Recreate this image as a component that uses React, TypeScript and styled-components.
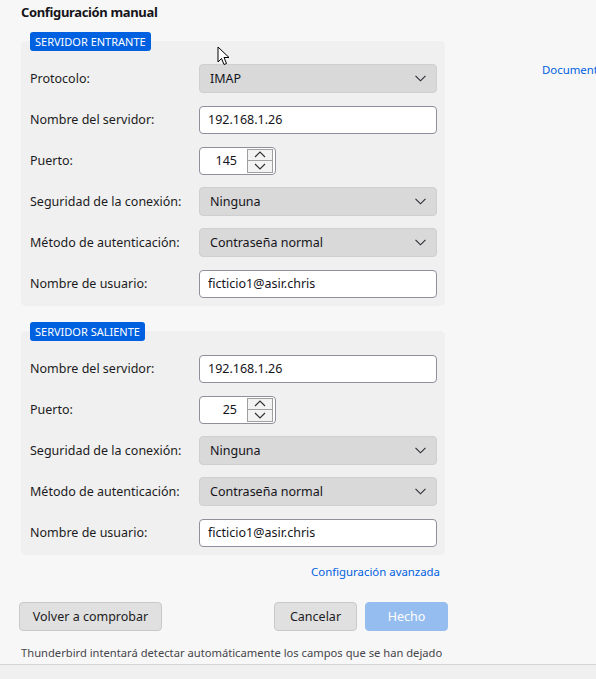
import React from "react";
import styled, { createGlobalStyle } from "styled-components";

const Global = createGlobalStyle`
  html, body { margin: 0; padding: 0; background: #f7f7f7; }
  body { font-family: "Noto Sans", "Open Sans", sans-serif; color: #15141a; }
  * { box-sizing: border-box; }
`;

const Page = styled.div`
  position: relative;
  width: 596px;
  height: 679px;
  overflow: hidden;
  background: #f7f7f7;
  display: flex;
  flex-direction: column;
`;

const Body = styled.div`
  flex: 1;
  display: flex;
  gap: 94px;
  min-width: 0;
`;

const Main = styled.div`
  width: 448px;
  flex-shrink: 0;
  display: flex;
  flex-direction: column;
  padding-left: 19px;
`;

const Side = styled.div`
  padding-top: 57px;
  white-space: nowrap;
  min-width: 0;
`;

const Title = styled.h2`
  margin: 4px 0 0 2px;
  font-size: 13px;
  font-weight: 700;
  letter-spacing: -0.35px;
  line-height: 16px;
`;

const Section = styled.section<{ $top: number }>`
  position: relative;
  margin: ${(p) => p.$top}px 0 0 2px;
  width: 424px;
  display: flex;
  flex-direction: column;
`;

const Badge = styled.div`
  position: relative;
  z-index: 1;
  align-self: flex-start;
  margin-left: 9px;
  margin-bottom: -10px;
  height: 19px;
  padding: 0 5px;
  border-radius: 3px;
  background: #0061e0;
  color: #fff;
  font-size: 11px;
  line-height: 19px;
`;

const Panel = styled.div`
  background: #f0f0f0;
  border-radius: 5px;
  padding: 23px 8px 8px 9px;
  display: flex;
  flex-direction: column;
  gap: 12px;
`;

const Row = styled.div`
  height: 29px;
  display: grid;
  grid-template-columns: 169px 238px;
  align-items: center;
`;

const Label = styled.label`
  font-size: 12.5px;
  color: #1c1b22;
`;

const Select = styled.div`
  height: 29px;
  background: #d9d9d9;
  border: 1px solid #cfcfcf;
  border-radius: 4px;
  display: flex;
  align-items: center;
  justify-content: space-between;
  padding: 0 10px 0 10px;
  font-size: 12.5px;
`;

const Input = styled.div`
  height: 28px;
  width: 100%;
  background: #fff;
  border: 1px solid #8f8f9d;
  border-radius: 4px;
  display: flex;
  align-items: center;
  padding: 0 8px;
  font-size: 12.5px;
`;

const Spin = styled.div`
  height: 28px;
  width: 77px;
  background: #fff;
  border: 1px solid #8f8f9d;
  border-radius: 4px;
  display: flex;
  align-items: center;
  justify-content: flex-end;
  padding: 2px;
  gap: 10px;
  font-size: 12.5px;
`;

const SpinButtons = styled.div`
  display: flex;
  flex-direction: column;
  width: 26px;
  height: 24px;
  border: 1px solid #a0a0a0;
  background: #f3f3f3;
`;

const SpinBtn = styled.div<{ $top?: boolean }>`
  flex: 1;
  display: flex;
  align-items: center;
  justify-content: center;
  border-top: ${(p) => (p.$top ? "none" : "1px solid #a0a0a0")};
`;

const LinkRow = styled.div`
  display: flex;
  justify-content: flex-end;
  margin-top: 9px;
  padding-right: 8px;
`;

const Link = styled.span`
  color: #0061e0;
  font-size: 11.4px;
`;

const Buttons = styled.div`
  display: flex;
  margin-top: 23px;
  gap: 8px;
`;

const Button = styled.div<{ $primary?: boolean; $w: number; $push?: boolean }>`
  width: ${(p) => p.$w}px;
  height: 29px;
  margin-left: ${(p) => (p.$push ? "auto" : "0")};
  border-radius: 4px;
  display: flex;
  align-items: center;
  justify-content: center;
  font-size: 12.5px;
  background: ${(p) => (p.$primary ? "#95bdf0" : "#e0e0e0")};
  border: 1px solid ${(p) => (p.$primary ? "#95bdf0" : "#c9c9c9")};
  color: ${(p) => (p.$primary ? "#fff" : "#1c1b22")};
`;

const Note = styled.p`
  margin: 14px 0 0 2px;
  font-size: 11.2px;
  color: #45454a;
  white-space: nowrap;
`;

const Footer = styled.div`
  height: 15px;
  background: #f0f0f0;
  border-top: 1px solid #d5d5d5;
`;

const Cursor = styled.svg`
  position: absolute;
  left: 217px;
  top: 46px;
`;

const Chevron = () => (
  <svg width="11" height="7" viewBox="0 0 11 7">
    <path d="M0.5 0.8 L5.5 5.8 L10.5 0.8" fill="none" stroke="#2b2a33" strokeWidth="1.1" />
  </svg>
);

const Arrow = ({ up }: { up?: boolean }) => (
  <svg width="12" height="7" viewBox="0 0 12 7">
    <path
      d={up ? "M1 6 L6 1 L11 6" : "M1 1 L6 6 L11 1"}
      fill="none"
      stroke="#333"
      strokeWidth="1.2"
    />
  </svg>
);

type Field =
  | { kind: "select"; label: string; value: string }
  | { kind: "input"; label: string; value: string }
  | { kind: "spin"; label: string; value: string };

const FieldRow = ({ f }: { f: Field }) => (
  <Row>
    <Label>{f.label}</Label>
    {f.kind === "select" && (
      <Select>
        <span>{f.value}</span>
        <Chevron />
      </Select>
    )}
    {f.kind === "input" && <Input>{f.value}</Input>}
    {f.kind === "spin" && (
      <Spin>
        <span>{f.value}</span>
        <SpinButtons>
          <SpinBtn $top>
            <Arrow up />
          </SpinBtn>
          <SpinBtn>
            <Arrow />
          </SpinBtn>
        </SpinButtons>
      </Spin>
    )}
  </Row>
);

const incoming: Field[] = [
  { kind: "select", label: "Protocolo:", value: "IMAP" },
  { kind: "input", label: "Nombre del servidor:", value: "192.168.1.26" },
  { kind: "spin", label: "Puerto:", value: "145" },
  { kind: "select", label: "Seguridad de la conexión:", value: "Ninguna" },
  { kind: "select", label: "Método de autenticación:", value: "Contraseña normal" },
  { kind: "input", label: "Nombre de usuario:", value: "ficticio1@asir.chris" },
];

const outgoing: Field[] = [
  { kind: "input", label: "Nombre del servidor:", value: "192.168.1.26" },
  { kind: "spin", label: "Puerto:", value: "25" },
  { kind: "select", label: "Seguridad de la conexión:", value: "Ninguna" },
  { kind: "select", label: "Método de autenticación:", value: "Contraseña normal" },
  { kind: "input", label: "Nombre de usuario:", value: "ficticio1@asir.chris" },
];

export default function App() {
  return (
    <Page>
      <Global />
      <Body>
        <Main>
          <Title>Configuración manual</Title>
          <Section $top={12}>
            <Badge>SERVIDOR ENTRANTE</Badge>
            <Panel>
              {incoming.map((f, i) => (
                <FieldRow key={i} f={f} />
              ))}
            </Panel>
          </Section>
          <Section $top={16}>
            <Badge>SERVIDOR SALIENTE</Badge>
            <Panel>
              {outgoing.map((f, i) => (
                <FieldRow key={i} f={f} />
              ))}
            </Panel>
          </Section>
          <LinkRow>
            <Link>Configuración avanzada</Link>
          </LinkRow>
          <Buttons>
            <Button $w={143}>Volver a comprobar</Button>
            <Button $w={83} $push>
              Cancelar
            </Button>
            <Button $w={83} $primary>
              Hecho
            </Button>
          </Buttons>
          <Note>Thunderbird intentará detectar automáticamente los campos que se han dejado</Note>
        </Main>
        <Side>
          <Link>Documentación</Link>
        </Side>
      </Body>
      <Footer />
      <Cursor width="13" height="20" viewBox="0 0 13 20">
        <path d="M1 1 L1 16 L4.5 12.5 L7 18.5 L9.5 17.5 L7 11.5 L12 11.5 Z" fill="#fff" stroke="#000" strokeWidth="1" strokeLinejoin="round" />
      </Cursor>
    </Page>
  );
}
